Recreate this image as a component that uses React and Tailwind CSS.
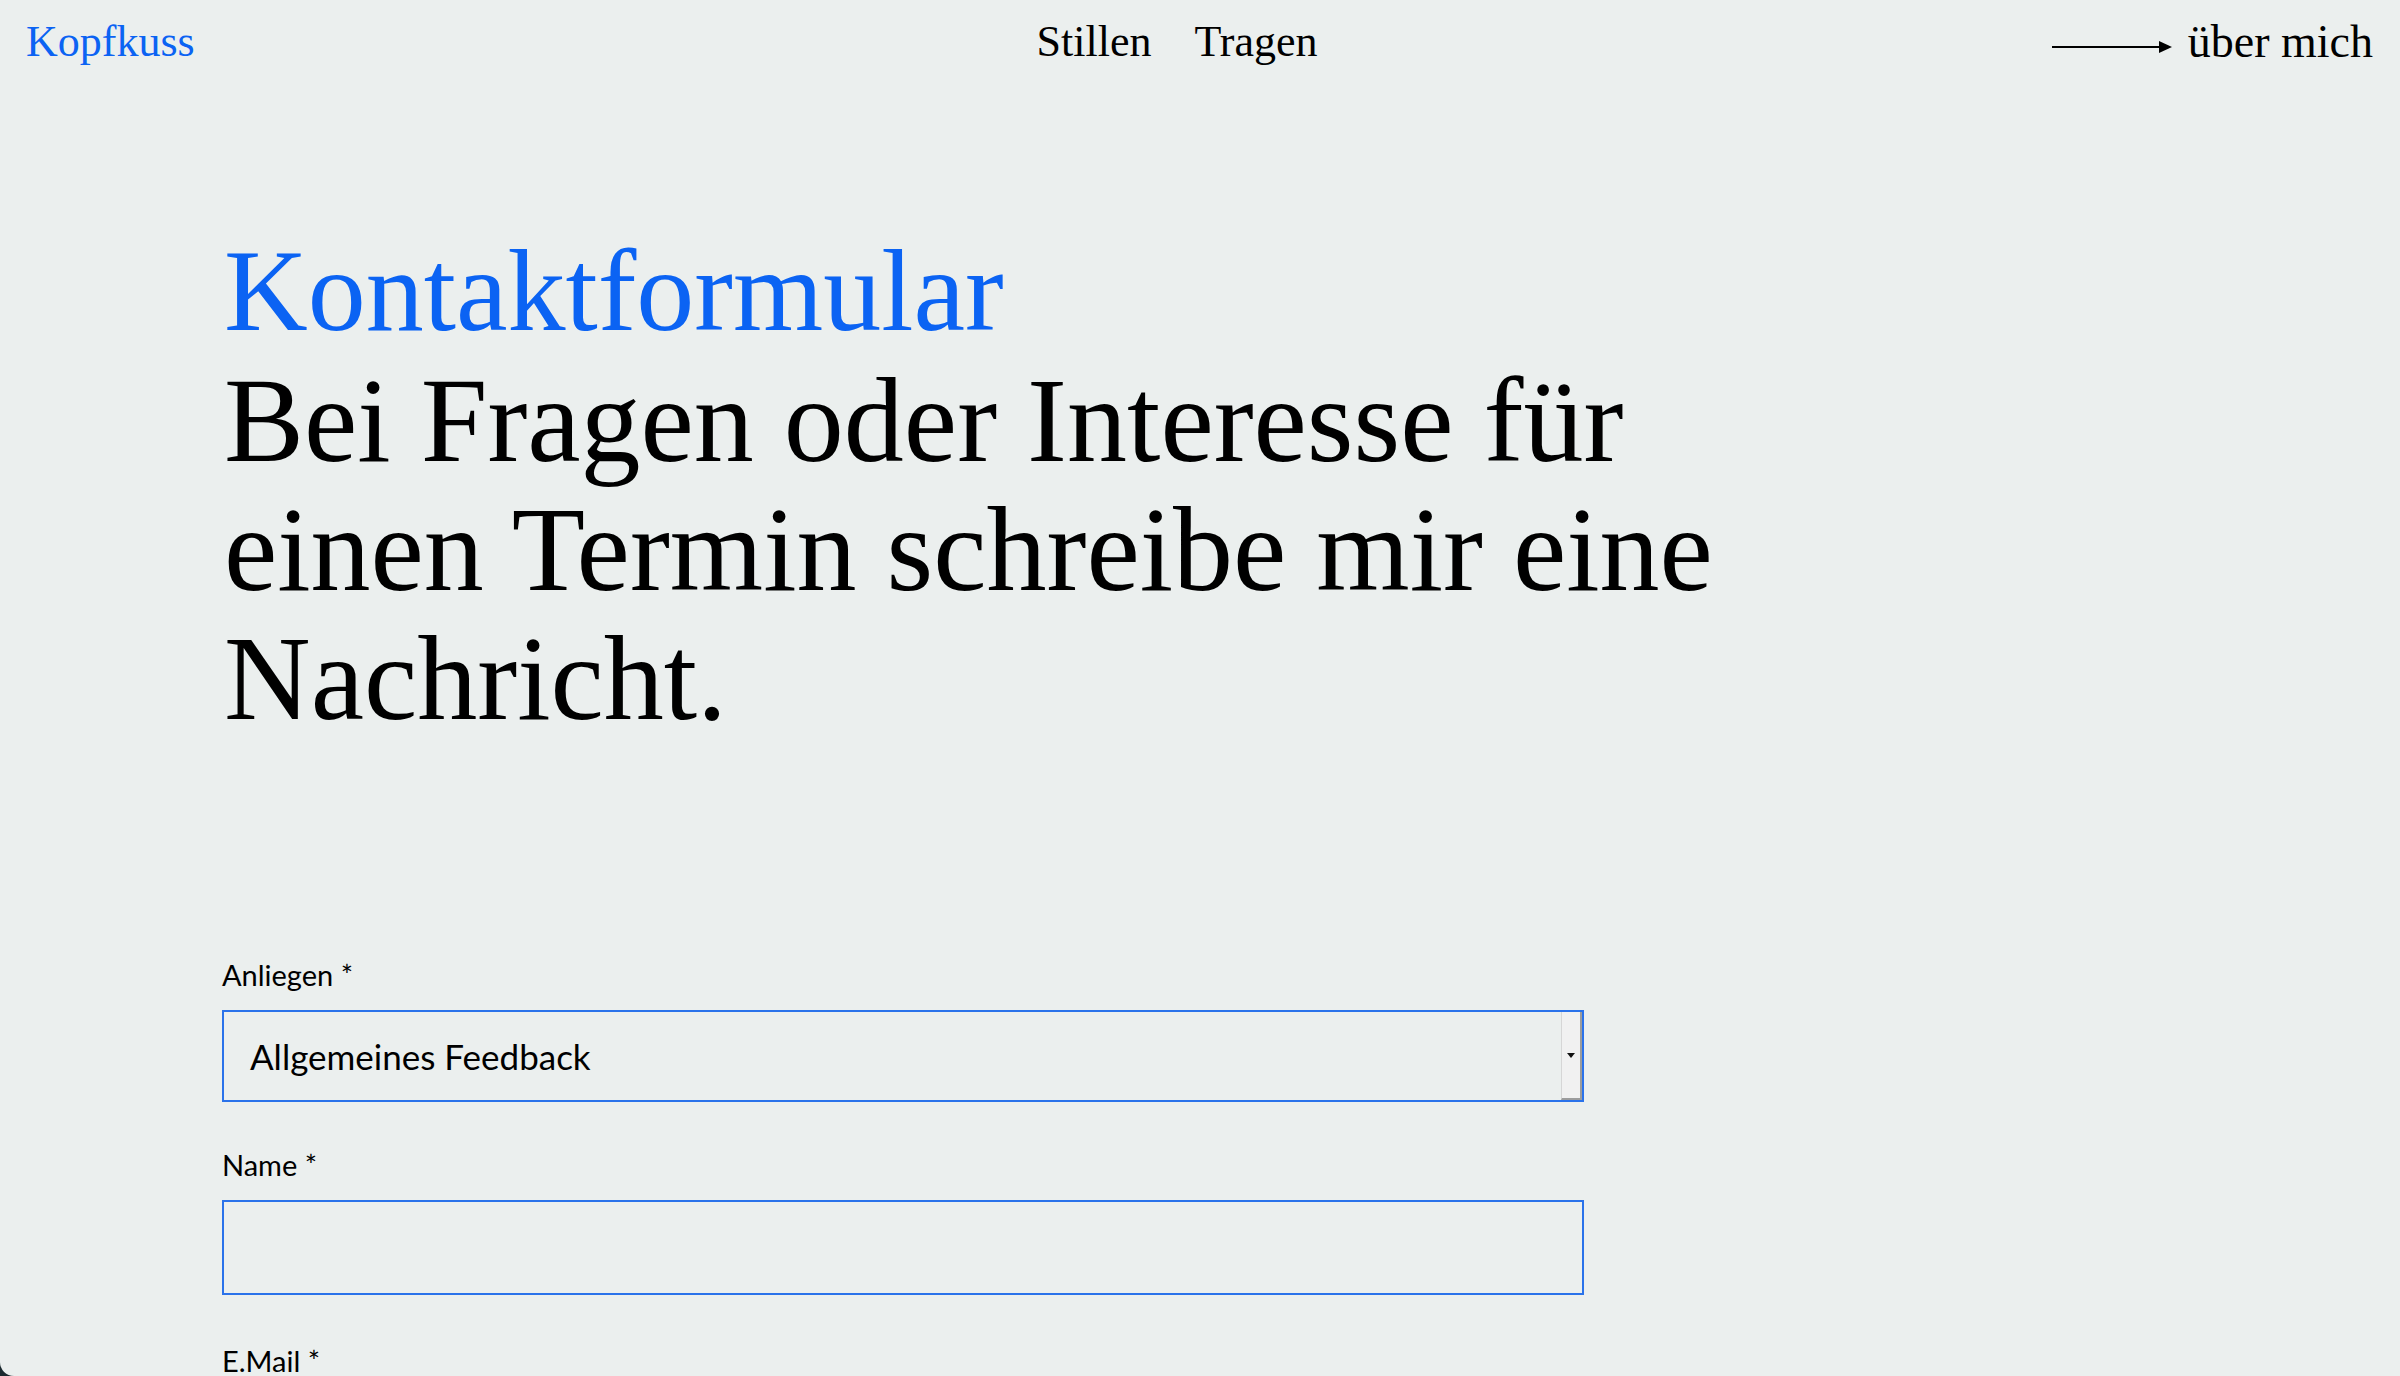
import React from 'react';

const serif = { fontFamily: '"Liberation Serif", "Times New Roman", serif' };
const sans = { fontFamily: 'Lato, "Noto Sans", sans-serif' };

const Arrow = () => (
  <svg width="120" height="14" viewBox="0 0 120 14" className="mt-[10px]">
    <line x1="0" y1="7" x2="110" y2="7" stroke="#000" strokeWidth="2" />
    <polygon points="107,1 120,7 107,13" fill="#000" />
  </svg>
);

const Field = ({ label, className, children }) => (
  <div className={className}>
    <label className="block text-[29px] leading-[36px] text-black mb-[17px]" style={sans}>
      {label} *
    </label>
    {children}
  </div>
);

const App = () => {
  return (
    <div className="h-[1376px] bg-[#1c2a30]">
      <div className="h-[1376px] overflow-hidden rounded-bl-[14px] bg-[#ebefee] text-black">

        {/* Header */}
        <header className="grid grid-cols-3 px-[26px] pt-[20px] text-[44px] leading-[44px]" style={serif}>
          <a href="#" className="text-[#0b63f3]">Kopfkuss</a>
          <nav className="flex justify-center gap-[43px] pr-[46px]">
            <a href="#">Stillen</a>
            <a href="#">Tragen</a>
          </nav>
          <div className="flex items-center justify-end gap-[16px] pr-[1px]">
            <Arrow />
            <a href="#" className="text-[46px]">über mich</a>
          </div>
        </header>

        <main className="pl-[222px]">
          {/* Heading */}
          <div className="mt-[163px] max-w-[1560px] text-[120px] leading-[129px] pl-[2px]" style={serif}>
            <h1 className="text-[116px] text-[#0b63f3]">Kontaktformular</h1>
            <p>Bei Fragen oder Interesse für einen Termin schreibe mir eine Nachricht.</p>
          </div>

          {/* Form */}
          <form className="w-[1362px] mt-[214px]">
            <Field label="Anliegen">
              <div className="flex h-[92px] border-2 border-[#2a72ea]">
                <div className="flex flex-1 items-center pl-[26px] text-[35px] leading-[42px]" style={sans}>
                  Allgemeines Feedback
                </div>
                <div className="flex w-[21px] items-center justify-center border-l border-l-[#d6d6d6] border-r-2 border-b-2 border-r-[#9c9c9c] border-b-[#9c9c9c] bg-[#f1f1f1]">
                  <svg width="8" height="5" viewBox="0 0 8 5">
                    <polygon points="0,0 8,0 4,5" fill="#111" />
                  </svg>
                </div>
              </div>
            </Field>

            <Field label="Name" className="mt-[45px]">
              <div className="h-[95px] border-2 border-[#2a72ea]" />
            </Field>

            <Field label="E.Mail" className="mt-[48px]">
              <div className="h-[95px] border-2 border-[#2a72ea]" />
            </Field>
          </form>
        </main>
      </div>
    </div>
  );
};

export default App;
